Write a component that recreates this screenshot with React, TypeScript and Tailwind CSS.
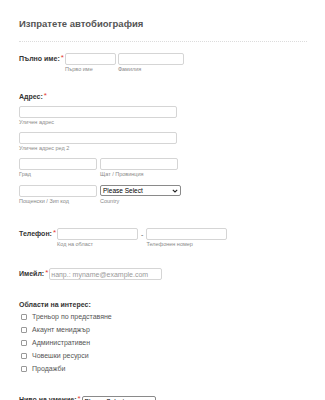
import React from 'react';

const font = "font-['Liberation_Sans',Arial,sans-serif]";

// small sub label under an input
const Sub = ({ text }: { text: string }) => (
  <div className="mt-[1px] text-[5.5px] leading-[7px] text-[#8a8a8a]">{text}</div>
);

const Box = ({ w }: { w: string }) => (
  <div className={`${w} h-[12px] border border-[#d5d5d5] rounded-[2px] bg-white`} />
);

const Star = () => <span className="text-[#e53935] text-[8px] leading-[8px] self-start ml-[1px]">*</span>;

const Select = ({ w }: { w: string }) => (
  <div className={`${w} h-[11px] border border-[#8a8a8a] rounded-[2px] flex items-center justify-between px-[2px] bg-white`}>
    <span className="text-[6.5px] leading-[8px] text-black">Please Select</span>
    <svg width="6" height="4" viewBox="0 0 6 4"><path d="M0.8 0.8 L3 3 L5.2 0.8" fill="none" stroke="#222" strokeWidth="1.1" /></svg>
  </div>
);

const Label = ({ text }: { text: string }) => (
  <div className="flex items-start pt-[1px]">
    <span className="text-[7px] leading-[10px] font-bold text-[#333]">{text}</span>
    <Star />
  </div>
);

const App: React.FC = () => {
  const interests = ['Треньор по представяне', 'Акаунт мениджър', 'Административен', 'Човешки ресурси', 'Продажби'];

  return (
    <div className={`${font} w-[325px] h-[400px] overflow-hidden bg-white pl-[19px]`}>
      {/* header */}
      <div className="pt-[17px] text-[9.5px] leading-[14px] font-bold text-[#555]">Изпратете автобиография</div>
      <div className="mt-[10px] w-[288px] border-t border-dotted border-[#dcdcdc]" />

      {/* full name */}
      <div className="mt-[11px] flex items-start">
        <Label text="Пълно име:" />
        <div className="ml-[1px]">
          <Box w="w-[51px]" />
          <Sub text="Първо име" />
        </div>
        <div className="ml-[2px]">
          <Box w="w-[66px]" />
          <Sub text="Фамилия" />
        </div>
      </div>

      {/* address */}
      <div className="mt-[19px] flex items-start">
        <span className="text-[7px] leading-[10px] font-bold text-[#333]">Адрес:</span>
        <Star />
      </div>
      <div className="mt-[4px]">
        <Box w="w-[158px]" />
        <Sub text="Уличен адрес" />
      </div>
      <div className="mt-[6px]">
        <Box w="w-[158px]" />
        <Sub text="Уличен адрес ред 2" />
      </div>
      <div className="mt-[6px] flex gap-[3px]">
        <div>
          <Box w="w-[78px]" />
          <Sub text="Град" />
        </div>
        <div>
          <Box w="w-[78px]" />
          <Sub text="Щат / Провинция" />
        </div>
      </div>
      <div className="mt-[7px] flex gap-[3px]">
        <div>
          <Box w="w-[78px]" />
          <Sub text="Пощенски / Зип код" />
        </div>
        <div>
          <Select w="w-[81px]" />
          <div className="mt-[1px] text-[5.5px] leading-[8px] text-[#8a8a8a]">Country</div>
        </div>
      </div>

      {/* phone */}
      <div className="mt-[23px] flex items-start">
        <Label text="Телефон:" />
        <div className="ml-[1px]">
          <Box w="w-[81px]" />
          <Sub text="Код на област" />
        </div>
        <span className="mx-[3px] text-[7px] leading-[14px] text-[#555]">-</span>
        <div>
          <Box w="w-[81px]" />
          <Sub text="Телефонен номер" />
        </div>
      </div>

      {/* email */}
      <div className="mt-[20px] flex items-start">
        <Label text="Имейл:" />
        <div className="ml-[1px] w-[113px] h-[12px] border border-[#d5d5d5] rounded-[2px] flex items-center px-[1px]">
          <span className="text-[7px] leading-[9px] text-[#999]">напр.: myname@example.com</span>
        </div>
      </div>

      {/* interests */}
      <div className="mt-[20px] text-[7px] leading-[10px] font-bold text-[#333]">Области на интерес:</div>
      <div>
        {interests.map((item) => (
          <div key={item} className="h-[13px] flex items-center">
            <div className="ml-[2px] w-[6px] h-[6px] border border-[#999] rounded-[1px]" />
            <span className="ml-[5px] text-[7px] leading-[9px] text-[#555]">{item}</span>
          </div>
        ))}
      </div>

      {/* skill level */}
      <div className="mt-[19px] flex items-start">
        <Label text="Ниво на умение:" />
        <div className="ml-[1px] mt-[2px]">
          <Select w="w-[74px]" />
        </div>
      </div>
    </div>
  );
};

export default App;
